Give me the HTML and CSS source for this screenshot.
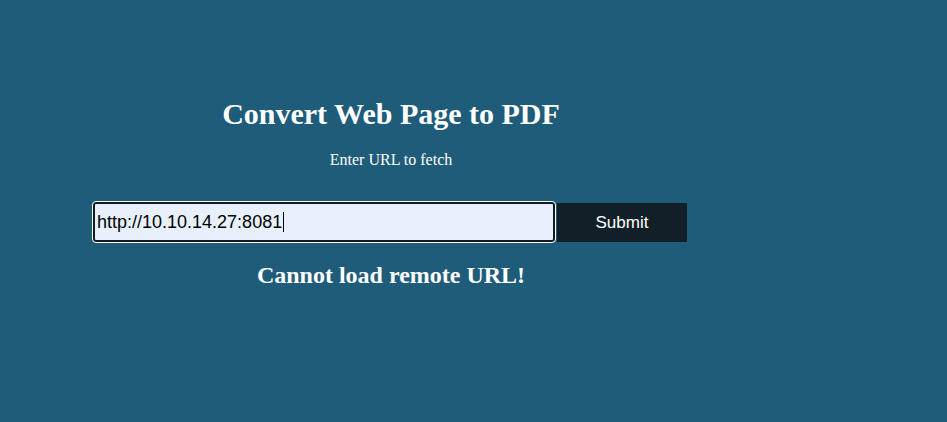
FILE: index.html
```html
<!DOCTYPE html>
<html>
<head>
<meta charset="utf-8">
<link rel="stylesheet" href="styles.css">
</head>
<body>
<div class="wrap">
  <h1 class="title">Convert Web Page to PDF</h1>
  <p class="sub">Enter URL to fetch</p>
  <form class="form">
    <div class="field">http://10.10.14.27:8081<span class="caret"></span></div>
    <button type="button" class="btn">Submit</button>
  </form>
  <h2 class="err">Cannot load remote URL!</h2>
</div>
</body>
</html>
```
FILE: styles.css
```css
html, body {
  margin: 0;
  padding: 0;
  background: #1e5c7a;
  height: 100%;
}
body {
  font-family: "Liberation Serif", "Times New Roman", serif;
  color: #ffffff;
}
.wrap {
  width: 766px;
  margin-left: 8px;
  padding-top: 96px;
  display: flex;
  flex-direction: column;
  align-items: center;
}
.title {
  margin: 0;
  font-size: 30px;
  font-weight: bold;
  line-height: 35px;
}
.sub {
  margin: 20px 0 0;
  font-size: 16px;
  line-height: 18px;
}
.form {
  margin-top: 33px;
  display: flex;
  align-items: center;
  gap: 2px;
  margin-left: -2px;
}
.field {
  box-sizing: border-box;
  width: 462px;
  height: 40px;
  background: #e8f0fe;
  border: 2px solid #101a22;
  outline: 1px solid #ffffff;
  border-radius: 3px;
  font-family: "Liberation Sans", Arial, sans-serif;
  font-size: 18px;
  color: #000;
  display: flex;
  align-items: center;
  padding-left: 2px;
}
.caret {
  display: inline-block;
  width: 1px;
  height: 20px;
  background: #000;
  margin-left: 1px;
}
.btn {
  width: 130px;
  height: 39px;
  border: none;
  background: #131f28;
  color: #fff;
  font-family: "Liberation Sans", Arial, sans-serif;
  font-size: 17px;
  padding: 1px 0 0;
}
.err {
  margin: 19px 0 0;
  font-size: 24px;
  font-weight: bold;
  line-height: 28px;
}
```
